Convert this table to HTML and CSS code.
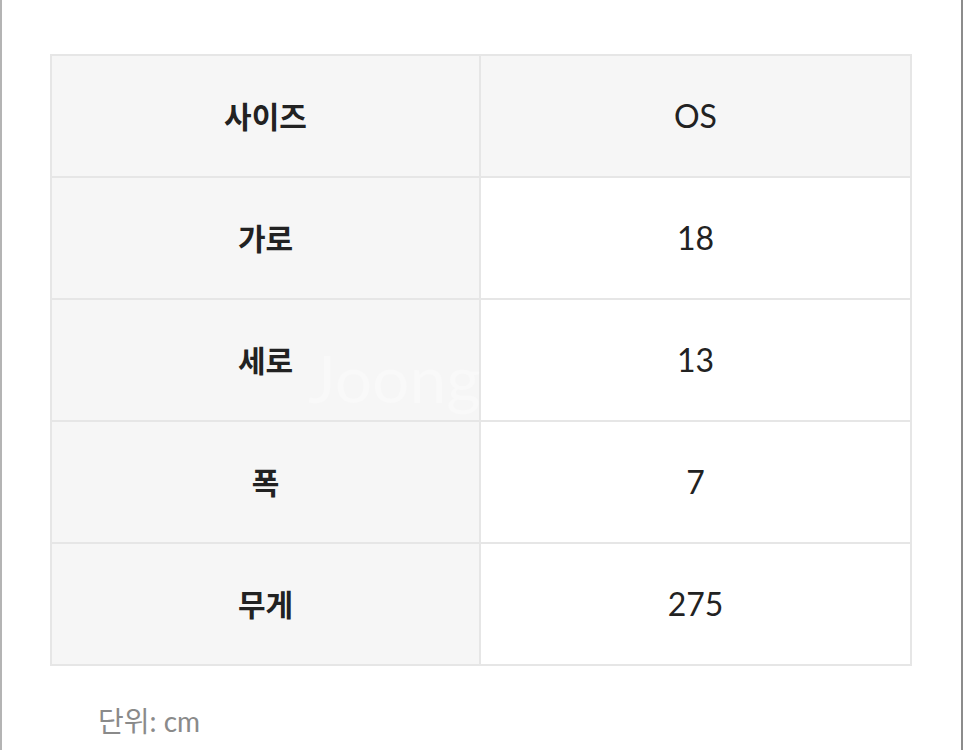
FILE: index.html
```html
<!DOCTYPE html>
<html lang="ko">
<head>
<meta charset="utf-8">
<link rel="stylesheet" href="styles.css">
</head>
<body>
<div class="page">
  <div class="table-wrap">
    <table class="size-table">
      <tr class="head">
        <td class="label">사이즈</td>
        <td class="value">OS</td>
      </tr>
      <tr>
        <td class="label">가로</td>
        <td class="value">18</td>
      </tr>
      <tr>
        <td class="label">세로</td>
        <td class="value">13</td>
      </tr>
      <tr>
        <td class="label">폭</td>
        <td class="value">7</td>
      </tr>
      <tr>
        <td class="label">무게</td>
        <td class="value">275</td>
      </tr>
    </table>
    <div class="watermark">Joongo</div>
  </div>
  <p class="unit">단위: cm</p>
</div>
</body>
</html>
```
FILE: styles.css
```css
html, body {
  margin: 0;
  padding: 0;
  background: #ffffff;
}
.page {
  width: 963px;
  height: 750px;
  box-sizing: border-box;
  border-left: 2px solid #b4b4b4;
  border-right: 2px solid #8c8c8c;
  padding: 54px 0 0 48px;
  font-family: Lato, "Noto Sans CJK KR", sans-serif;
  color: #222;
  overflow: hidden;
}
.table-wrap {
  position: relative;
  width: 862px;
}
.size-table {
  width: 862px;
  border-collapse: separate;
  border-spacing: 0;
  border-top: 2px solid #e6e6e6;
  border-left: 2px solid #e6e6e6;
  table-layout: fixed;
}
.size-table td {
  height: 120px;
  padding: 0;
  text-align: center;
  vertical-align: middle;
  border-right: 2px solid #e6e6e6;
  border-bottom: 2px solid #e6e6e6;
  line-height: 1.2;
}
.size-table .label {
  width: 427px;
  background: #f6f6f6;
  font-weight: 700;
  font-size: 30px;
}
.size-table .value {
  background: #ffffff;
  font-weight: 400;
  font-size: 32px;
}
.size-table .head .value {
  background: #f6f6f6;
}
.watermark {
  position: absolute;
  left: 258px;
  top: 284px;
  font-family: Lato, sans-serif;
  font-size: 66px;
  font-weight: 400;
  color: rgba(255, 255, 255, 0.3);
  pointer-events: none;
}
.unit {
  margin: 34px 0 0 48px;
  font-size: 28px;
  color: #8a8a8a;
  font-weight: 400;
}
```
